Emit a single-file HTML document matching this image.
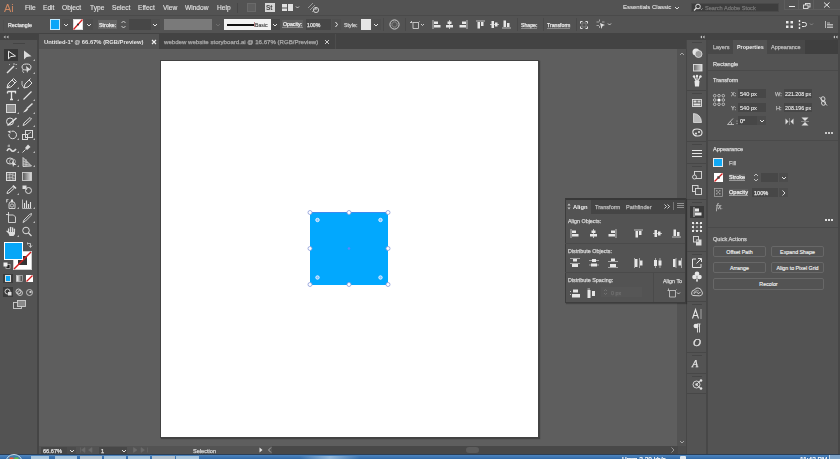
<!DOCTYPE html>
<html><head><meta charset="utf-8">
<style>
*{margin:0;padding:0;box-sizing:border-box}
html,body{width:840px;height:459px;overflow:hidden;background:#535353;font-family:"Liberation Sans",sans-serif;color:#d6d6d6;position:relative}
.a{position:absolute}
.t{position:absolute;white-space:nowrap;font-size:7px;line-height:8px;will-change:transform;-webkit-text-stroke:0.25px currentColor}
.t[style*="bold"],.big{-webkit-text-stroke:0}
.t.mi{-webkit-text-stroke:0.12px currentColor}
svg{position:absolute;overflow:visible}
#menubar{left:0;top:0;width:840px;height:15px;background:#535353}
#ctrl{left:0;top:15px;width:840px;height:18px;background:#535353;border-top:1px solid #4a4a4a}
#tools{left:0;top:33px;width:38px;height:421px;background:#535353}
#tabs{left:38px;top:33px;width:649px;height:16px;background:#434343}
#canvas{left:39px;top:49px;width:638px;height:397px;background:#5e5e5e}
#vscroll{left:677px;top:49px;width:9px;height:397px;background:#535353}
#hscroll{left:38px;top:446px;width:649px;height:9px;background:#535353}
#dockhdr{left:686px;top:33px;width:154px;height:7px;background:#434343}
#dock{left:686px;top:40px;width:21px;height:414px;background:#535353;border-left:1px solid #474747;border-right:1px solid #474747}
#props{left:707px;top:40px;width:133px;height:414px;background:#535353;border-left:1px solid #474747}
#taskbar{left:0;top:455px;width:840px;height:4px;background:#2a63a3}
#artboard{left:160px;top:60px;width:379px;height:378px;background:#fff;border:1px solid #424242;box-shadow:1px 1px 1px rgba(40,40,40,0.5)}
#rect{left:310px;top:212px;width:78px;height:73px;background:#02a8fe;border-top:1px solid #3a8bf0}
.btn{border:1px solid #686868;border-radius:2px;font-size:5.3px;color:#f2f2f2;text-align:center;line-height:10px;white-space:nowrap;-webkit-text-stroke:0.15px #f2f2f2}
.mi{top:4px;font-size:6.6px;color:#e2e2e2}
</style></head><body>
<svg width="0" height="0" style="position:absolute">
<defs>
<symbol id="al-l" viewBox="0 0 9 9"><rect x="0.5" y="0" width="1" height="9" fill="#bdbdbd"/><rect x="2" y="1.5" width="4" height="2.5" fill="#e6e6e6"/><rect x="2" y="5" width="6.5" height="2.5" fill="#e6e6e6"/></symbol>
<symbol id="al-c" viewBox="0 0 9 9"><rect x="4" y="0" width="1" height="9" fill="#bdbdbd"/><rect x="2.5" y="1.5" width="4" height="2.5" fill="#e6e6e6"/><rect x="1" y="5" width="7" height="2.5" fill="#e6e6e6"/></symbol>
<symbol id="al-r" viewBox="0 0 9 9"><rect x="7.5" y="0" width="1" height="9" fill="#bdbdbd"/><rect x="3" y="1.5" width="4" height="2.5" fill="#e6e6e6"/><rect x="0.5" y="5" width="6.5" height="2.5" fill="#e6e6e6"/></symbol>
<symbol id="al-t" viewBox="0 0 9 9"><rect x="0" y="0.5" width="9" height="1" fill="#bdbdbd"/><rect x="1.5" y="2" width="2.5" height="6.5" fill="#e6e6e6"/><rect x="5" y="2" width="2.5" height="4" fill="#e6e6e6"/></symbol>
<symbol id="al-m" viewBox="0 0 9 9"><rect x="0" y="4" width="9" height="1" fill="#bdbdbd"/><rect x="1.5" y="1" width="2.5" height="7" fill="#e6e6e6"/><rect x="5" y="2.5" width="2.5" height="4" fill="#e6e6e6"/></symbol>
<symbol id="al-b" viewBox="0 0 9 9"><rect x="0" y="7.5" width="9" height="1" fill="#bdbdbd"/><rect x="1.5" y="0.5" width="2.5" height="6.5" fill="#e6e6e6"/><rect x="5" y="3" width="2.5" height="4" fill="#e6e6e6"/></symbol>
<symbol id="chev" viewBox="0 0 6 4"><path d="M1 1 L3 3 L5 1" stroke="#e0e0e0" stroke-width="1" fill="none"/></symbol>
<symbol id="tri" viewBox="0 0 3 3"><path d="M3 1 V3 H1 Z" fill="#b8b8b8"/></symbol>
</defs>
</svg>
<div id="menubar" class="a"></div>
<div id="ctrl" class="a"></div>
<div id="tools" class="a"></div>
<div id="tabs" class="a"></div>
<div id="canvas" class="a"></div>
<div id="vscroll" class="a"></div>
<div id="hscroll" class="a"></div>
<div id="dockhdr" class="a"></div>
<div id="dock" class="a"></div>
<div id="props" class="a"></div>
<div id="taskbar" class="a"></div>
<div id="artboard" class="a"></div>
<div id="rect" class="a"></div>

<!-- MENUBAR -->
<div class="t big" style="left:4px;top:2px;font-size:10.8px;line-height:12px;color:#cf8962">Ai</div>
<div class="t mi" style="left:25px">File</div>
<div class="t mi" style="left:43px">Edit</div>
<div class="t mi" style="left:62px">Object</div>
<div class="t mi" style="left:90px">Type</div>
<div class="t mi" style="left:112px">Select</div>
<div class="t mi" style="left:138px">Effect</div>
<div class="t mi" style="left:163px">View</div>
<div class="t mi" style="left:185px">Window</div>
<div class="t mi" style="left:217px">Help</div>
<div class="a" style="left:237px;top:3px;width:1px;height:10px;background:#474747"></div>
<div class="a" style="left:247px;top:3px;width:9px;height:9px;background:#5e5e5e;border:1px solid #6a6a6a"></div>
<div class="a" style="left:265px;top:3px;width:10px;height:9px;background:#d6d6d6"></div>
<div class="t" style="left:266px;top:4px;font-size:6.5px;color:#444;font-weight:bold;line-height:7px">St</div>
<svg style="left:282px;top:4px" width="20" height="8"><rect x="0" y="0" width="5" height="3.5" fill="#e0e0e0"/><rect x="6" y="0" width="5" height="7" fill="#e0e0e0"/><rect x="0" y="4.5" width="5" height="2.5" fill="#e0e0e0"/><path d="M14 2.5 L15.5 4 L17 2.5" stroke="#ddd" stroke-width="0.9" fill="none"/></svg>
<svg style="left:307px;top:2px" width="13" height="12"><path d="M1 6 L6 1 M3 8 L8 3 M5 10 L9 6" stroke="#9a9a9a" stroke-width="1"/><circle cx="9" cy="8" r="2.6" fill="none" stroke="#d8d8d8" stroke-width="0.9"/><path d="M9 5 V8" stroke="#d8d8d8" stroke-width="0.9"/></svg>
<div class="t" style="left:623px;top:3px;font-size:6px;color:#e3e3e3;-webkit-text-stroke:0.1px #e3e3e3">Essentials Classic</div>
<svg style="left:674px;top:6px" width="6" height="4"><use href="#chev"/></svg>
<div class="a" style="left:691px;top:3px;width:88px;height:9px;background:#3e3e3e;border:1px solid #4a4a4a"></div>
<svg style="left:693px;top:3px" width="11" height="9"><circle cx="5" cy="3.5" r="2.3" fill="none" stroke="#e0e0e0" stroke-width="1"/><path d="M3.5 5 L1 7.5" stroke="#e0e0e0" stroke-width="1.2"/><path d="M7.5 5.5 L8.5 6.5 L9.5 5.5" stroke="#ccc" stroke-width="0.7" fill="none"/></svg>
<div class="t" style="left:705px;top:3.5px;font-size:5.6px;color:#777">Search Adobe Stock</div>
<div class="a" style="left:784px;top:0px;width:56px;height:10px;border:1px solid #5d5d5d;border-top:none;border-right:none"></div>
<div class="a" style="left:798px;top:0px;width:1px;height:9px;background:#5d5d5d"></div>
<div class="a" style="left:813px;top:0px;width:1px;height:9px;background:#5d5d5d"></div>
<div class="a" style="left:789px;top:6px;width:6px;height:1px;background:#e8e8e8"></div>
<svg style="left:803px;top:3px" width="8" height="6"><rect x="2.5" y="0.5" width="4.5" height="3.5" fill="none" stroke="#e0e0e0" stroke-width="0.9"/><rect x="0.5" y="2" width="4.5" height="3.5" fill="#535353" stroke="#e0e0e0" stroke-width="0.9"/></svg>
<svg style="left:823px;top:2px" width="8" height="6"><path d="M1 0.5 L6.5 5.5 M6.5 0.5 L1 5.5" stroke="#e8e8e8" stroke-width="1"/></svg>


<!-- CONTROL BAR -->
<div class="a" style="left:3px;top:20px;width:1px;height:11px;background:#4f4f4f"></div>
<div class="t" style="left:8px;top:21px;font-size:5.3px;color:#e6e6e6">Rectangle</div>
<div class="a" style="left:50px;top:19px;width:10px;height:11px;background:#c4e9fc;padding:1px"><div style="width:8px;height:9px;background:#0aa6f8"></div></div>
<div class="a" style="left:62px;top:19px;width:8px;height:11px;background:#4f4f4f"></div>
<svg style="left:63px;top:23px" width="6" height="4"><path d="M1 1 L3 3 L5 1" stroke="#e0e0e0" stroke-width="1" fill="none"/></svg>
<svg style="left:73px;top:19px" width="10" height="11"><rect x="0" y="0" width="10" height="11" fill="#fff"/><rect x="0.5" y="0.5" width="9" height="10" fill="none" stroke="#ddd"/><path d="M0.5 10.5 L9.5 0.5" stroke="#d62020" stroke-width="1.3"/><circle cx="5" cy="5.5" r="1.1" fill="#333"/></svg>
<div class="a" style="left:85px;top:19px;width:8px;height:11px;background:#4f4f4f"></div>
<svg style="left:86px;top:23px" width="6" height="4"><path d="M1 1 L3 3 L5 1" stroke="#e0e0e0" stroke-width="1" fill="none"/></svg>
<div class="a" style="left:98px;top:20px;width:19px;height:9px;background:#656565"></div>
<div class="t" style="left:99px;top:21px;font-size:5.4px;color:#e8e8e8">Stroke:</div>
<svg style="left:120px;top:19px" width="7" height="11"><path d="M1.5 4 L3.5 2 L5.5 4 M1.5 7 L3.5 9 L5.5 7" stroke="#d8d8d8" stroke-width="0.9" fill="none"/></svg>
<div class="a" style="left:129px;top:19px;width:22px;height:11px;background:#474747"></div>
<div class="a" style="left:151px;top:19px;width:9px;height:11px;background:#4f4f4f"></div>
<svg style="left:152px;top:23px" width="6" height="4"><path d="M1 1 L3 3 L5 1" stroke="#e8e8e8" stroke-width="1" fill="none"/></svg>
<div class="a" style="left:164px;top:19px;width:48px;height:11px;background:#7a7a7a"></div>
<svg style="left:215px;top:23px" width="6" height="4"><path d="M1 1 L3 3 L5 1" stroke="#6e6e6e" stroke-width="1" fill="none"/></svg>
<div class="a" style="left:224px;top:19px;width:47px;height:11px;background:#f2f2f2"></div>
<div class="a" style="left:227px;top:24px;width:27px;height:2px;background:#111"></div>
<div class="a" style="left:254px;top:22px;width:1px;height:5px;background:#b88"></div>
<div class="t" style="left:255px;top:21px;font-size:5.2px;color:#3a3a3a;-webkit-text-stroke:0.1px #3a3a3a">Basic</div>
<div class="a" style="left:271px;top:19px;width:9px;height:11px;background:#474747"></div>
<svg style="left:272px;top:23px" width="6" height="4"><path d="M1 1 L3 3 L5 1" stroke="#e8e8e8" stroke-width="1" fill="none"/></svg>
<div class="t" style="left:282px;top:20px;font-size:5.2px;color:#ececec;background:#5f5f5f;padding:1px 1px 0;border-bottom:1px solid #8a8a8a;line-height:6px">Opacity:</div>
<div class="a" style="left:306px;top:19px;width:25px;height:11px;background:#474747"></div>
<div class="t" style="left:307px;top:21px;font-size:5.2px;color:#e0e0e0">100%</div>
<div class="a" style="left:332px;top:19px;width:9px;height:11px;background:#4f4f4f"></div>
<svg style="left:334px;top:21px" width="5" height="7"><path d="M1.5 1 L3.5 3.5 L1.5 6" stroke="#e8e8e8" stroke-width="1" fill="none"/></svg>
<div class="t" style="left:344px;top:21px;font-size:5.4px;color:#d0d0d0">Style:</div>
<div class="a" style="left:361px;top:19px;width:10px;height:11px;background:#e6e6e6"></div>
<div class="a" style="left:372px;top:19px;width:9px;height:11px;background:#4f4f4f"></div>
<svg style="left:373px;top:23px" width="6" height="4"><path d="M1 1 L3 3 L5 1" stroke="#e8e8e8" stroke-width="1" fill="none"/></svg>
<div class="a" style="left:383px;top:18px;width:1px;height:13px;background:#4a4a4a"></div>
<svg style="left:389px;top:19px" width="11" height="11"><circle cx="5.5" cy="5.5" r="4.6" fill="none" stroke="#d0d0d0" stroke-width="1"/><circle cx="5.5" cy="5.5" r="2.6" fill="none" stroke="#bbb" stroke-width="1" stroke-dasharray="1 1"/></svg>
<div class="a" style="left:405px;top:18px;width:1px;height:13px;background:#4a4a4a"></div>
<svg style="left:410px;top:19px" width="16" height="11"><path d="M1.5 2 V4 M0 3.5 H2.5 M3 3.5 H8.5 V9.5 H3 V3.5 M8.5 3.5 L9.5 2.5" stroke="#cfcfcf" stroke-width="0.9" fill="none"/><path d="M11 5 L12.5 6.5 L14 5" stroke="#ddd" stroke-width="0.9" fill="none"/></svg>
<svg style="left:432px;top:20px" width="9" height="9"><use href="#al-l"/></svg>
<svg style="left:445px;top:20px" width="9" height="9"><use href="#al-c"/></svg>
<svg style="left:459px;top:20px" width="9" height="9"><use href="#al-r"/></svg>
<svg style="left:476px;top:20px" width="9" height="9"><use href="#al-t"/></svg>
<svg style="left:490px;top:20px" width="9" height="9"><use href="#al-m"/></svg>
<svg style="left:502px;top:20px" width="9" height="9"><use href="#al-b"/></svg>
<div class="a" style="left:517px;top:18px;width:1px;height:13px;background:#4a4a4a"></div>
<div class="t" style="left:521px;top:22px;font-size:5.2px;color:#e8e8e8;border-bottom:1px solid #888;line-height:6px">Shape:</div>
<div class="a" style="left:543px;top:18px;width:1px;height:13px;background:#4a4a4a"></div>
<div class="t" style="left:547px;top:22px;font-size:5.2px;color:#e8e8e8;border-bottom:1px solid #888;line-height:6px">Transform</div>
<div class="a" style="left:576px;top:18px;width:1px;height:13px;background:#4a4a4a"></div>
<svg style="left:580px;top:21px" width="8" height="8"><path d="M0.5 2.5 V0.5 H2.5 M5.5 0.5 H7.5 V2.5 M7.5 5.5 V7.5 H5.5 M2.5 7.5 H0.5 V5.5" stroke="#e0e0e0" stroke-width="1" fill="none"/><rect x="2" y="2" width="4" height="4" fill="none" stroke="#9a9a9a" stroke-width="0.6"/></svg>
<svg style="left:596px;top:19px" width="18" height="11"><path d="M0.5 3 H3 M6 3 H8.5 M0.5 6.5 H3 M3.5 0.5 V2.5 M3.5 7 V9" stroke="#bdbdbd" stroke-width="0.8"/><path d="M4 4 L9 6 L6.5 7 L5.5 10 Z" fill="#e0e0e0"/><path d="M12 4.5 L13.5 6 L15 4.5" stroke="#ddd" stroke-width="0.9" fill="none"/></svg>
<svg style="left:786px;top:21px" width="7" height="7"><rect x="0" y="0" width="2.5" height="2.5" fill="#e8e8e8"/><rect x="4.5" y="0" width="2.5" height="2.5" fill="#e8e8e8"/><rect x="0" y="4.5" width="2.5" height="2.5" fill="#e8e8e8"/><rect x="4.5" y="4.5" width="2.5" height="2.5" fill="#e8e8e8"/></svg>
<svg style="left:798px;top:19px" width="20" height="11"><path d="M1.5 1 V3 M1.5 4.5 V6.5 M1.5 8 V10" stroke="#e8e8e8" stroke-width="1.4"/><path d="M4 3.5 H6.5 A2 2 0 0 1 6.5 7.5 H4" stroke="#e8e8e8" stroke-width="1" fill="none"/><path d="M12 4.5 L13.5 6 L15 4.5" stroke="#8a8a8a" stroke-width="0.9" fill="none"/></svg>
<svg style="left:825px;top:21px" width="8" height="7"><path d="M0.5 0 V7 M2 3.5 H8 M2 5 H8 M2 6.5 H8 M2 2 H5" stroke="#cfcfcf" stroke-width="0.8"/></svg>
<div class="a" style="left:838px;top:16px;width:2px;height:17px;background:#474747"></div>


<!-- TABS -->
<div class="a" style="left:39px;top:34px;width:120px;height:15px;background:#535353"></div>
<div class="t" style="left:44px;top:38px;font-size:5.8px;font-weight:bold;color:#e6e6e6">Untitled-1* @ 66.67% (RGB/Preview)</div>
<svg style="left:151px;top:39px" width="6" height="6"><path d="M1 1 L5 5 M5 1 L1 5" stroke="#f0f0f0" stroke-width="1.1"/></svg>
<div class="t" style="left:164px;top:38px;font-size:6.1px;color:#ababab">webdew website storyboard.ai @ 16.67% (RGB/Preview)</div>
<svg style="left:324px;top:39px" width="6" height="6"><path d="M1 1 L5 5 M5 1 L1 5" stroke="#ccc" stroke-width="1"/></svg><div class="a" style="left:335px;top:34px;width:1px;height:15px;background:#4d4d4d"></div>


<!-- TOOLS -->
<div class="a" style="left:0;top:33px;width:38px;height:7px;background:#434343"></div>
<svg style="left:3px;top:35px" width="6" height="4"><path d="M2.5 0.5 L0.5 2 L2.5 3.5 Z M5.5 0.5 L3.5 2 L5.5 3.5 Z" fill="#bdbdbd"/></svg>
<div class="a" style="left:37px;top:40px;width:2px;height:414px;background:#454545"></div>
<div class="a" style="left:13px;top:43px;width:12px;height:1px;background:#444"></div>
<!-- row1 -->
<div class="a" style="left:4px;top:49px;width:14px;height:12px;background:#383838"></div>
<svg style="left:7px;top:50px" width="10" height="10"><path d="M1.5 1.2 L1.5 8.8 L3.8 6.6 L8.5 6 Z" fill="none" stroke="#e8e8e8" stroke-width="1" stroke-linejoin="round"/></svg>
<svg style="left:23px;top:50px" width="10" height="10"><path d="M1 0.5 L1 9.5 L3.6 7 L8.5 6.2 Z" fill="#dadada"/></svg>
<svg style="left:32px;top:58px" width="3" height="3"><use href="#tri"/></svg>
<!-- row2 wand / lasso -->
<svg style="left:6px;top:63px" width="11" height="11"><path d="M1 10 L8 3" stroke="#e0e0e0" stroke-width="1.5"/><path d="M8 0 V2 M9.5 1.5 H11 M3 1 L4 2 M10 5 L10.5 6" stroke="#cfcfcf" stroke-width="0.8"/></svg>
<svg style="left:21px;top:63px" width="12" height="11"><ellipse cx="5.5" cy="4" rx="4.5" ry="3" fill="none" stroke="#dcdcdc" stroke-width="1"/><path d="M5 3 L10 7 L7.5 7.3 L6 10 Z" fill="#dcdcdc"/><path d="M2 6 Q1 9 3 10" stroke="#ccc" stroke-width="0.9" fill="none"/></svg>
<svg style="left:32px;top:71px" width="3" height="3"><use href="#tri"/></svg>
<!-- row3 pen / curvature -->
<svg style="left:6px;top:78px" width="11" height="11"><path d="M1 10 L2 6 L6 2 L9 5 L5 9 Z" fill="none" stroke="#e0e0e0" stroke-width="1"/><path d="M6 2 L7.5 0.5 L10.5 3.5 L9 5" fill="none" stroke="#e0e0e0" stroke-width="1"/><path d="M1 10 L4 7" stroke="#e0e0e0" stroke-width="0.8"/></svg>
<svg style="left:16px;top:86px" width="3" height="3"><use href="#tri"/></svg>
<svg style="left:21px;top:78px" width="12" height="11"><path d="M3 10 L4 6 L8 2 L11 5 L7 9 Z" fill="none" stroke="#e0e0e0" stroke-width="1"/><path d="M8 2 L9.5 0.5" stroke="#e0e0e0" stroke-width="1"/><path d="M1 3 Q0 7 3 10" stroke="#ccc" stroke-width="0.9" fill="none"/></svg>
<!-- row4 type / line -->
<svg style="left:7px;top:91px" width="9" height="9"><path d="M0.5 0.5 H8.5 V2.5 M0.5 0.5 V2.5 M4.5 0.5 V8.5 M3 8.5 H6" stroke="#e6e6e6" stroke-width="1.3" fill="none"/></svg>
<svg style="left:16px;top:98px" width="3" height="3"><use href="#tri"/></svg>
<svg style="left:23px;top:91px" width="9" height="9"><path d="M0.5 8.5 L8.5 0.5" stroke="#e6e6e6" stroke-width="1.1"/></svg>
<svg style="left:32px;top:98px" width="3" height="3"><use href="#tri"/></svg>
<!-- row5 rect / brush -->
<svg style="left:6px;top:104px" width="10" height="9"><rect x="0.5" y="0.5" width="9" height="8" fill="#8a8a8a" stroke="#d8d8d8" stroke-width="1"/><path d="M3 1 V8 M5 1 V8 M7 1 V8 M1 3 H9 M1 5 H9" stroke="#9c9c9c" stroke-width="0.5"/></svg>
<svg style="left:16px;top:111px" width="3" height="3"><use href="#tri"/></svg>
<svg style="left:22px;top:103px" width="11" height="10"><path d="M10.5 0.5 L5 5.5" stroke="#e0e0e0" stroke-width="1.5"/><path d="M5 5 L1 9.5 L4 8.5 L6 6.5 Z" fill="#e6e6e6"/></svg>
<svg style="left:32px;top:111px" width="3" height="3"><use href="#tri"/></svg>
<!-- row6 shaper / pencil -->
<svg style="left:6px;top:117px" width="11" height="9"><circle cx="4" cy="4.5" r="3.5" fill="none" stroke="#dcdcdc" stroke-width="1"/><path d="M1.5 8.5 L10.5 1" stroke="#e6e6e6" stroke-width="1.5"/></svg>
<svg style="left:16px;top:124px" width="3" height="3"><use href="#tri"/></svg>
<svg style="left:22px;top:117px" width="10" height="9"><path d="M1 8.5 L2 6 L8 0.5 L9.5 2 L3.5 7.5 Z" fill="none" stroke="#dcdcdc" stroke-width="1"/></svg>
<svg style="left:32px;top:124px" width="3" height="3"><use href="#tri"/></svg>
<!-- row7 rotate / scale -->
<svg style="left:7px;top:130px" width="10" height="10"><path d="M2 4 A3.8 3.8 0 1 0 4.5 1.3" fill="none" stroke="#e0e0e0" stroke-width="1"/><path d="M0.5 1.5 L3.5 0.5 L3.5 3.5 Z" fill="#e0e0e0"/></svg>
<svg style="left:16px;top:137px" width="3" height="3"><use href="#tri"/></svg>
<svg style="left:22px;top:130px" width="11" height="10"><rect x="0.5" y="4.5" width="5" height="5" fill="none" stroke="#dcdcdc" stroke-width="1"/><rect x="3.5" y="0.5" width="7" height="7" fill="none" stroke="#dcdcdc" stroke-width="1"/><path d="M5 5 L9 2" stroke="#dcdcdc" stroke-width="0.8"/></svg>
<svg style="left:32px;top:137px" width="3" height="3"><use href="#tri"/></svg>
<!-- row8 width / puppet -->
<svg style="left:6px;top:144px" width="11" height="9"><path d="M1 7 Q3 3 5 6 Q7 9 10 5" fill="none" stroke="#dcdcdc" stroke-width="1.6"/><path d="M3 0.5 V3 M1.5 2 H4" stroke="#ccc" stroke-width="0.8"/></svg>
<svg style="left:16px;top:150px" width="3" height="3"><use href="#tri"/></svg>
<svg style="left:22px;top:144px" width="9" height="9"><path d="M0.5 8.5 L3.5 5.5" stroke="#dcdcdc" stroke-width="1"/><path d="M3 4 L5 6 L8.5 3 L6 0.5 Z" fill="#dcdcdc"/></svg>
<svg style="left:32px;top:150px" width="3" height="3"><use href="#tri"/></svg>
<!-- row9 shape builder / perspective -->
<svg style="left:6px;top:157px" width="12" height="10"><ellipse cx="4" cy="4" rx="3.5" ry="3" fill="none" stroke="#dcdcdc" stroke-width="1"/><ellipse cx="6.5" cy="4.5" rx="3" ry="2.5" fill="none" stroke="#bbb" stroke-width="0.8"/><path d="M6 4 L10.5 8 L8 8 L7 10 Z" fill="#e0e0e0"/></svg>
<svg style="left:16px;top:164px" width="3" height="3"><use href="#tri"/></svg>
<svg style="left:22px;top:157px" width="10" height="10"><path d="M1 0.5 V9.5 L9.5 9 Z" fill="#7a7a7a" stroke="#dcdcdc" stroke-width="0.9"/><path d="M1 4 L6 6 M1 7 L8 8 M4 2 V9.3" stroke="#dcdcdc" stroke-width="0.6"/></svg>
<svg style="left:32px;top:164px" width="3" height="3"><use href="#tri"/></svg>
<!-- row10 mesh / gradient -->
<svg style="left:6px;top:172px" width="10" height="9"><rect x="0.5" y="0.5" width="9" height="8" fill="#6e6e6e" stroke="#dcdcdc" stroke-width="1"/><path d="M1 3 Q5 1 9 4 M1 6 Q5 4 9 7 M4 1 Q3 5 4 8 M7 1 Q6 5 7 8" stroke="#cfcfcf" stroke-width="0.6" fill="none"/></svg>
<svg style="left:22px;top:172px" width="10" height="9"><defs><linearGradient id="g1"><stop offset="0" stop-color="#555"/><stop offset="1" stop-color="#e0e0e0"/></linearGradient></defs><rect x="0.5" y="0.5" width="9" height="8" fill="url(#g1)" stroke="#cfcfcf" stroke-width="0.9"/></svg>
<!-- row11 eyedropper / blend -->
<svg style="left:6px;top:185px" width="11" height="9"><path d="M1 8.5 L1.5 6.5 L7 1.5 L8.5 3 L3 8 Z" fill="none" stroke="#dcdcdc" stroke-width="1"/><path d="M7 0.5 L10 3.5" stroke="#e6e6e6" stroke-width="1.4"/></svg>
<svg style="left:16px;top:192px" width="3" height="3"><use href="#tri"/></svg>
<svg style="left:22px;top:185px" width="10" height="9"><rect x="0.5" y="0.5" width="4" height="3.5" fill="#dcdcdc"/><circle cx="6.5" cy="5.5" r="3" fill="none" stroke="#dcdcdc" stroke-width="1"/><path d="M3 3 L5 5" stroke="#ccc" stroke-width="0.8"/></svg>
<!-- row12 symbol sprayer / graph -->
<svg style="left:6px;top:199px" width="11" height="10"><path d="M0.5 0.5 V3.5 M0.5 0.5 H2.5 M0.5 2 H2" stroke="#cfcfcf" stroke-width="0.8"/><path d="M4 3 H8 L9 5 V9.5 H3 V5 Z" fill="none" stroke="#dcdcdc" stroke-width="0.9"/><circle cx="6" cy="6.5" r="1.6" fill="none" stroke="#dcdcdc" stroke-width="0.8"/><rect x="5" y="0.5" width="2" height="2.5" fill="#dcdcdc"/></svg>
<svg style="left:16px;top:206px" width="3" height="3"><use href="#tri"/></svg>
<svg style="left:22px;top:199px" width="10" height="10"><path d="M0.5 0.5 V9.5 H9.5" stroke="#cfcfcf" stroke-width="0.8" fill="none"/><path d="M2.5 9 V4 M4.5 9 V1.5 M6.5 9 V5 M8.5 9 V3" stroke="#e0e0e0" stroke-width="1.1"/></svg>
<svg style="left:32px;top:206px" width="3" height="3"><use href="#tri"/></svg>
<!-- row13 artboard / slice -->
<svg style="left:6px;top:212px" width="10" height="11"><path d="M2.5 0 V3 M0 2.5 H3" stroke="#dcdcdc" stroke-width="0.9"/><path d="M2.5 3 H7.5 L9.5 5 V10.5 H2.5 Z" fill="none" stroke="#dcdcdc" stroke-width="0.9"/></svg>
<svg style="left:22px;top:213px" width="10" height="10"><path d="M1 9.5 L2 7 L7.5 1.5 L9.5 0.5 L9 2.5 L3.5 8 Z" fill="none" stroke="#dcdcdc" stroke-width="0.9"/></svg>
<svg style="left:32px;top:220px" width="3" height="3"><use href="#tri"/></svg>
<!-- row14 hand / zoom -->
<svg style="left:6px;top:226px" width="10" height="11"><g stroke="#dcdcdc" stroke-width="1.3" stroke-linecap="round" fill="none"><path d="M2.6 6.5 V3"/><path d="M4.6 5.5 V1.3"/><path d="M6.6 5.5 V1.8"/><path d="M8.4 6 V3.2"/><path d="M2.6 6.5 L1 5.2"/></g><path d="M2 6 H9 V8 L7.5 10 H3.5 Z" fill="#dcdcdc"/></svg>
<svg style="left:16px;top:234px" width="3" height="3"><use href="#tri"/></svg>
<svg style="left:22px;top:226px" width="10" height="11"><circle cx="4" cy="4.5" r="3.3" fill="none" stroke="#dcdcdc" stroke-width="1"/><path d="M6.5 7 L9.5 10" stroke="#dcdcdc" stroke-width="1.2"/></svg>
<!-- fill/stroke -->
<svg style="left:13px;top:251px" width="19" height="19"><rect x="0" y="0" width="19" height="19" fill="#fff"/><rect x="0.5" y="0.5" width="18" height="18" fill="none" stroke="#cfcfcf"/><rect x="5" y="5" width="9" height="9" fill="#353535"/><path d="M1 18 L18 1" stroke="#d61d1d" stroke-width="1.4"/></svg>
<div class="a" style="left:4px;top:242px;width:19px;height:18px;background:#fff;padding:1px"><div style="width:17px;height:16px;background:#07a6f7"></div></div>
<svg style="left:27px;top:242px" width="6" height="7"><path d="M0.5 1.5 H3.5 V5 M2 3.5 L3.5 5.5 L5 3.5 M0.5 0.5 L0.5 2.5" stroke="#d6d6d6" stroke-width="0.8" fill="none"/></svg>
<svg style="left:3px;top:262px" width="8" height="7"><rect x="3" y="2.5" width="4" height="4" fill="#222" stroke="#e0e0e0" stroke-width="0.6"/><rect x="0.5" y="0.5" width="4" height="4" fill="#f0f0f0"/></svg>
<!-- color modes -->
<div class="a" style="left:3px;top:274px;width:10px;height:9px;background:#3c3c3c"></div>
<div class="a" style="left:5px;top:275px;width:6px;height:7px;background:#0aa6f7;border:1px solid #ddd"></div>
<svg style="left:16px;top:275px" width="7" height="7"><defs><linearGradient id="g2"><stop offset="0" stop-color="#fff"/><stop offset="1" stop-color="#333"/></linearGradient></defs><rect x="0.5" y="0.5" width="6" height="6" fill="url(#g2)" stroke="#ccc" stroke-width="0.6"/></svg>
<svg style="left:26px;top:275px" width="7" height="7"><rect x="0" y="0" width="7" height="7" fill="#fff"/><path d="M0.5 6.5 L6.5 0.5" stroke="#d61d1d" stroke-width="1.3"/></svg>
<!-- draw modes -->
<div class="a" style="left:3px;top:287px;width:10px;height:10px;background:#3c3c3c"></div>
<svg style="left:4px;top:288px" width="8" height="8"><circle cx="3.5" cy="3.5" r="2.5" fill="none" stroke="#ddd" stroke-width="0.9"/><rect x="4" y="4" width="3.5" height="3.5" fill="#ddd"/></svg>
<svg style="left:15px;top:288px" width="8" height="8"><circle cx="3.5" cy="3.5" r="2.5" fill="none" stroke="#ddd" stroke-width="0.9"/><circle cx="5" cy="5" r="2.5" fill="none" stroke="#ccc" stroke-width="0.9"/></svg>
<svg style="left:26px;top:289px" width="7" height="7"><circle cx="3.5" cy="3.5" r="3" fill="none" stroke="#ccc" stroke-width="0.9"/><rect x="3.5" y="2" width="2" height="2" fill="#ccc"/></svg>
<!-- screen mode -->
<svg style="left:13px;top:300px" width="13" height="9"><rect x="0.5" y="2.5" width="8" height="6" fill="#535353" stroke="#cfcfcf" stroke-width="0.9"/><rect x="4.5" y="0.5" width="8" height="6" fill="#888" stroke="#cfcfcf" stroke-width="0.9"/></svg>


<!-- ART -->
<svg style="left:300px;top:202px" width="100" height="95">
<g fill="#fff" stroke="#8a9ad8" stroke-width="0.8">
<circle cx="10" cy="10.5" r="2"/><circle cx="49" cy="10.5" r="2"/><circle cx="88" cy="10.5" r="2"/>
<circle cx="10" cy="46.5" r="2"/><circle cx="88" cy="46.5" r="2"/>
<circle cx="10" cy="82.5" r="2"/><circle cx="49" cy="82.5" r="2"/><circle cx="88" cy="82.5" r="2"/>
</g>
<g fill="#7ec2ff" stroke="#e6f2ff" stroke-width="1">
<circle cx="17.5" cy="18" r="1.7"/><circle cx="80.5" cy="18" r="1.7"/><circle cx="17.5" cy="75.5" r="1.7"/><circle cx="80.5" cy="75.5" r="1.7"/>
</g>
<circle cx="49" cy="46.5" r="1.3" fill="#5a88ff"/>
</svg>


<!-- ALIGN PANEL -->
<div class="a" style="left:565px;top:198px;width:121px;height:105px;background:#535353;border:1px solid #3d3d3d;border-top:2px solid #383838;box-shadow:1px 1px 1px rgba(0,0,0,0.25)"></div>
<div class="a" style="left:566px;top:200px;width:119px;height:14px;background:#454545"></div>
<div class="a" style="left:566px;top:200px;width:25px;height:14px;background:#535353"></div>
<svg style="left:567px;top:203px" width="4" height="7"><path d="M2 0.5 L3.5 2.5 H0.5 Z M2 6.5 L3.5 4.5 H0.5 Z" fill="#ccc"/></svg>
<div class="t" style="left:573px;top:203px;font-size:5.8px;font-weight:bold;color:#f0f0f0">Align</div>
<div class="t" style="left:595px;top:203px;font-size:5.6px;color:#bdbdbd">Transform</div>
<div class="t" style="left:626px;top:203px;font-size:5.6px;color:#bdbdbd">Pathfinder</div>
<svg style="left:664px;top:204px" width="7" height="5"><path d="M0.5 0.5 L2.5 2.5 L0.5 4.5 M3.5 0.5 L5.5 2.5 L3.5 4.5" stroke="#e0e0e0" stroke-width="0.9" fill="none"/></svg>
<div class="a" style="left:673px;top:202px;width:1px;height:8px;background:#777"></div>
<svg style="left:677px;top:203px" width="7" height="6"><path d="M0 0.5 H7 M0 2.5 H7 M0 4.5 H7" stroke="#9a9a9a" stroke-width="0.9"/></svg>
<div class="t" style="left:568px;top:217px;font-size:5.4px;color:#d6d6d6">Align Objects:</div>
<svg style="left:570px;top:229px" width="9" height="9"><use href="#al-l"/></svg>
<svg style="left:589px;top:229px" width="9" height="9"><use href="#al-c"/></svg>
<svg style="left:608px;top:229px" width="9" height="9"><use href="#al-r"/></svg>
<svg style="left:634px;top:229px" width="9" height="9"><use href="#al-t"/></svg>
<svg style="left:653px;top:229px" width="9" height="9"><use href="#al-m"/></svg>
<svg style="left:672px;top:229px" width="9" height="9"><use href="#al-b"/></svg>
<div class="a" style="left:565px;top:243px;width:120px;height:1px;background:#4a4a4a"></div>
<div class="t" style="left:568px;top:247px;font-size:5.4px;color:#d6d6d6">Distribute Objects:</div>
<svg style="left:570px;top:258px" width="10" height="10"><path d="M0 0.5 H10 M0 5.5 H10" stroke="#bdbdbd" stroke-width="0.8"/><rect x="3" y="1" width="4" height="2.5" fill="#e6e6e6"/><rect x="2" y="6" width="6" height="3" fill="#e6e6e6"/></svg>
<svg style="left:589px;top:258px" width="10" height="10"><path d="M0 2.5 H10 M0 7 H10" stroke="#bdbdbd" stroke-width="0.8"/><rect x="3" y="1" width="4" height="3" fill="#e6e6e6"/><rect x="2" y="5.5" width="6" height="3" fill="#e6e6e6"/></svg>
<svg style="left:608px;top:258px" width="10" height="10"><path d="M0 3.5 H10 M0 9.5 H10" stroke="#bdbdbd" stroke-width="0.8"/><rect x="3" y="0.5" width="4" height="2.5" fill="#e6e6e6"/><rect x="2" y="6" width="6" height="3" fill="#e6e6e6"/></svg>
<svg style="left:634px;top:258px" width="10" height="10"><path d="M0.5 0 V10 M5.5 0 V10" stroke="#bdbdbd" stroke-width="0.8"/><rect x="1" y="1" width="2.5" height="8" fill="#e6e6e6"/><rect x="6" y="2.5" width="2.5" height="5" fill="#e6e6e6"/></svg>
<svg style="left:653px;top:258px" width="10" height="10"><path d="M2.5 0 V10 M7 0 V10" stroke="#bdbdbd" stroke-width="0.8"/><rect x="1" y="2" width="3" height="6" fill="#e6e6e6"/><rect x="5.5" y="2.5" width="3" height="5" fill="#e6e6e6"/></svg>
<svg style="left:672px;top:258px" width="10" height="10"><path d="M4 0 V10 M9.5 0 V10" stroke="#bdbdbd" stroke-width="0.8"/><rect x="1" y="1" width="2.5" height="8" fill="#e6e6e6"/><rect x="6.5" y="2.5" width="2.5" height="5" fill="#e6e6e6"/></svg>
<div class="a" style="left:565px;top:272px;width:120px;height:1px;background:#4a4a4a"></div>
<div class="a" style="left:653px;top:273px;width:1px;height:29px;background:#4a4a4a"></div>
<div class="t" style="left:568px;top:276px;font-size:5.4px;color:#d6d6d6">Distribute Spacing:</div>
<div class="t" style="left:663px;top:277px;font-size:5.4px;color:#d6d6d6">Align To</div>
<svg style="left:570px;top:289px" width="10" height="9"><path d="M0.5 2 V3 M0.5 5 V6" stroke="#cfcfcf" stroke-width="0.9"/><rect x="3" y="0.5" width="5" height="3" fill="#e6e6e6"/><rect x="2" y="5" width="8" height="3.5" fill="#e6e6e6"/></svg>
<svg style="left:587px;top:288px" width="9" height="10"><path d="M0.5 1 H3" stroke="#cfcfcf" stroke-width="0.9"/><rect x="0.5" y="2" width="3" height="8" fill="#e6e6e6"/><rect x="5" y="3" width="3" height="5" fill="#e6e6e6"/></svg>
<div class="a" style="left:601px;top:287px;width:41px;height:10px;background:#565656"></div>
<svg style="left:603px;top:288px" width="5" height="8"><path d="M1 3 L2.5 1.5 L4 3 M1 5 L2.5 6.5 L4 5" stroke="#777" stroke-width="0.8" fill="none"/></svg>
<div class="t" style="left:611px;top:289px;font-size:5.4px;color:#707070">0 px</div>
<svg style="left:667px;top:288px" width="14" height="10"><path d="M1.5 0.5 V2.5 M0.5 2.5 H2.5 M2.5 2.5 H8.5 V9 H2.5 Z M8.5 2.5 L9.5 1.5" stroke="#cfcfcf" stroke-width="0.8" fill="none"/><path d="M10 4.5 L11.5 6 L13 4.5" stroke="#ddd" stroke-width="0.8" fill="none"/></svg>


<!-- DOCK -->
<svg style="left:700px;top:35px" width="5" height="4"><path d="M2 0.5 L0.3 2 L2 3.5 Z M4.5 0.5 L2.8 2 L4.5 3.5 Z" fill="#d0d0d0"/></svg>
<svg style="left:833px;top:35px" width="5" height="4"><path d="M2 0.5 L0.3 2 L2 3.5 Z M4.5 0.5 L2.8 2 L4.5 3.5 Z" fill="#d0d0d0"/></svg>
<!-- grips & separators -->
<div class="a" style="left:692px;top:42px;width:10px;height:1px;background:#464646"></div>
<div class="a" style="left:687px;top:90px;width:19px;height:1px;background:#474747"></div>
<div class="a" style="left:692px;top:93px;width:10px;height:1px;background:#464646"></div>
<div class="a" style="left:687px;top:141px;width:19px;height:1px;background:#474747"></div>
<div class="a" style="left:692px;top:144px;width:10px;height:1px;background:#464646"></div>
<div class="a" style="left:687px;top:163px;width:19px;height:1px;background:#474747"></div>
<div class="a" style="left:692px;top:166px;width:10px;height:1px;background:#464646"></div>
<div class="a" style="left:687px;top:199px;width:19px;height:1px;background:#474747"></div>
<div class="a" style="left:692px;top:202px;width:10px;height:1px;background:#464646"></div>
<div class="a" style="left:687px;top:251px;width:19px;height:1px;background:#474747"></div>
<div class="a" style="left:692px;top:254px;width:10px;height:1px;background:#464646"></div>
<div class="a" style="left:687px;top:301px;width:19px;height:1px;background:#474747"></div>
<div class="a" style="left:692px;top:304px;width:10px;height:1px;background:#464646"></div>
<div class="a" style="left:687px;top:352px;width:19px;height:1px;background:#474747"></div>
<div class="a" style="left:692px;top:355px;width:10px;height:1px;background:#464646"></div>
<div class="a" style="left:687px;top:373px;width:19px;height:1px;background:#474747"></div>
<div class="a" style="left:692px;top:376px;width:10px;height:1px;background:#464646"></div>
<div class="a" style="left:687px;top:393px;width:19px;height:1px;background:#474747"></div>
<!-- icons -->
<svg style="left:692px;top:48px" width="11" height="10"><circle cx="4" cy="4" r="3.5" fill="#e6e6e6"/><circle cx="6.5" cy="6" r="3.5" fill="#9a9a9a" stroke="#e6e6e6" stroke-width="0.8"/></svg>
<svg style="left:692px;top:63px" width="11" height="9"><defs><linearGradient id="g3"><stop offset="0" stop-color="#666"/><stop offset="1" stop-color="#ddd"/></linearGradient></defs><rect x="1.5" y="1.5" width="8.5" height="6.5" fill="url(#g3)" stroke="#e0e0e0" stroke-width="0.9"/></svg>
<svg style="left:692px;top:75px" width="10" height="12"><path d="M2 1 L4 6 M5 0.5 L5 6 M8.5 1 L6 6" stroke="#e6e6e6" stroke-width="1.1"/><circle cx="2" cy="1.5" r="1.2" fill="#e6e6e6"/><circle cx="5" cy="1" r="1.2" fill="#e6e6e6"/><circle cx="8.5" cy="1.5" r="1.2" fill="#e6e6e6"/><path d="M2.5 6 H7.5 L7 11.5 H3 Z" fill="#e6e6e6"/></svg>
<svg style="left:692px;top:99px" width="10" height="8"><rect x="0.5" y="0.5" width="9" height="7" fill="#535353" stroke="#e0e0e0" stroke-width="0.9"/><rect x="1.5" y="1.5" width="3" height="2" fill="#e0e0e0"/><rect x="5.5" y="1.5" width="3" height="2" fill="#cfcfcf"/><rect x="1.5" y="4.5" width="7" height="2" fill="#e6e6e6"/></svg>
<svg style="left:693px;top:113px" width="9" height="10"><path d="M0.5 0.5 Q8 1 8.5 9.5 H0.5 Z" fill="#bbb" stroke="#e0e0e0" stroke-width="0.8"/></svg>
<svg style="left:692px;top:128px" width="11" height="9"><path d="M1 5 Q0 1 5 1 Q10 1 10 4.5 Q10 8 6 8 Q2 8.5 1 5 Z" fill="none" stroke="#e6e6e6" stroke-width="1.1"/><circle cx="4" cy="5.5" r="1" fill="#e6e6e6"/><circle cx="7" cy="4" r="1" fill="#e6e6e6"/></svg>
<svg style="left:692px;top:150px" width="10" height="7"><path d="M0 0.5 H10 M0 3.5 H10 M0 6.5 H10" stroke="#e6e6e6" stroke-width="1"/></svg>
<svg style="left:692px;top:171px" width="10" height="9"><rect x="2.5" y="0.5" width="7" height="7" fill="none" stroke="#dcdcdc" stroke-width="0.9"/><circle cx="2.5" cy="6" r="2" fill="#535353" stroke="#dcdcdc" stroke-width="0.9"/></svg>
<svg style="left:692px;top:185px" width="10" height="10"><rect x="0.5" y="0.5" width="5.5" height="6" fill="none" stroke="#dcdcdc" stroke-width="0.9"/><rect x="3.5" y="3.5" width="6" height="6" fill="#535353" stroke="#dcdcdc" stroke-width="0.9"/></svg>
<div class="a" style="left:690px;top:206px;width:14px;height:12px;background:#3a3a3a"></div>
<svg style="left:693px;top:207px" width="9" height="10"><rect x="0.5" y="0" width="1" height="10" fill="#cfcfcf"/><rect x="2" y="1.5" width="4" height="3" fill="#e6e6e6"/><rect x="2" y="5.5" width="6.5" height="3" fill="#e6e6e6"/></svg>
<svg style="left:692px;top:222px" width="10" height="10"><rect x="1.5" y="1.5" width="7" height="7" fill="none" stroke="#bbb" stroke-width="0.6" stroke-dasharray="1 1"/><g fill="#e6e6e6"><rect x="0" y="0" width="2" height="2"/><rect x="4" y="0" width="2" height="2"/><rect x="8" y="0" width="2" height="2"/><rect x="0" y="4" width="2" height="2"/><rect x="8" y="4" width="2" height="2"/><rect x="0" y="8" width="2" height="2"/><rect x="4" y="8" width="2" height="2"/><rect x="8" y="8" width="2" height="2"/><rect x="4.3" y="4.3" width="1.4" height="1.4"/></g></svg>
<svg style="left:693px;top:236px" width="9" height="10"><rect x="0.5" y="0.5" width="5" height="5.5" fill="#535353" stroke="#dcdcdc" stroke-width="0.9"/><rect x="3" y="3.5" width="5.5" height="6" fill="#dcdcdc"/><rect x="3.5" y="4" width="2" height="2" fill="#888"/></svg>
<svg style="left:692px;top:258px" width="10" height="10"><path d="M4 1 H0.5 V9.5 H9 V6" stroke="#e6e6e6" stroke-width="1" fill="none"/><path d="M4.5 5.5 L9 1 M6 0.5 H9.5 V4" stroke="#e6e6e6" stroke-width="1" fill="none"/></svg>
<svg style="left:692px;top:271px" width="10" height="11"><circle cx="5" cy="2.8" r="2.3" fill="#e6e6e6"/><circle cx="2.5" cy="6" r="2.3" fill="#e6e6e6"/><circle cx="7.5" cy="6" r="2.3" fill="#e6e6e6"/><path d="M5 5 L4 10.5 H6 Z" fill="#e6e6e6"/></svg>
<svg style="left:691px;top:287px" width="12" height="10"><path d="M2 8.5 Q0 8 0.7 5.5 Q1 3 3.5 3 Q4.5 0.7 7 1 Q10 1.2 10.5 4 Q11.8 5 11.3 7 Q10.8 8.8 8.5 8.8 Z" fill="none" stroke="#dcdcdc" stroke-width="0.9"/><path d="M3 7 Q3.5 4.5 5.5 5 Q7 5.5 7.5 7 Q8 5 9.5 5.5" fill="none" stroke="#dcdcdc" stroke-width="0.8"/><path d="M2.5 5.5 Q5 2.5 8 4" fill="none" stroke="#bdbdbd" stroke-width="0.7"/></svg>
<svg style="left:692px;top:309px" width="11" height="10"><path d="M0.5 9.5 L3.5 0.5 L6.5 9.5 M1.5 6.5 H5.5" stroke="#e6e6e6" stroke-width="1.1" fill="none"/><path d="M9 0 V10" stroke="#bbb" stroke-width="0.8"/></svg>
<svg style="left:693px;top:323px" width="8" height="10"><path d="M4 1 H7.5 M4.5 1 V9.5 M6.5 1 V9.5" stroke="#e6e6e6" stroke-width="0.9" fill="none"/><ellipse cx="3" cy="3" rx="2.5" ry="2.2" fill="#e6e6e6"/></svg>
<div class="t" style="left:693px;top:336px;font-size:11px;line-height:12px;color:#e6e6e6;font-family:'Liberation Serif',serif;font-style:italic">O</div>
<div class="t" style="left:692px;top:358px;font-size:10px;line-height:11px;color:#e6e6e6;font-family:'Liberation Serif',serif;font-style:italic">A</div>
<svg style="left:692px;top:379px" width="11" height="11"><circle cx="4.5" cy="5.5" r="3.5" fill="none" stroke="#dcdcdc" stroke-width="0.9"/><circle cx="4.5" cy="5.5" r="1.2" fill="#dcdcdc"/><path d="M4.5 5.5 L9 1 M4.5 5.5 L9 10" stroke="#dcdcdc" stroke-width="0.9"/><circle cx="9" cy="1.5" r="1.3" fill="#e6e6e6"/><circle cx="9" cy="9.5" r="1.3" fill="#e6e6e6"/></svg>
<svg style="left:679px;top:52px" width="6" height="4"><path d="M1 3 L3 1 L5 3" stroke="#bdbdbd" stroke-width="0.8" fill="none"/></svg>
<svg style="left:679px;top:440px" width="6" height="4"><path d="M1 1 L3 3 L5 1" stroke="#bdbdbd" stroke-width="0.8" fill="none"/></svg>


<!-- PROPS -->
<div class="a" style="left:708px;top:40px;width:132px;height:14px;background:#3f3f3f"></div>
<div class="a" style="left:708px;top:40px;width:25px;height:14px;background:#484848"></div>
<div class="a" style="left:733px;top:40px;width:34px;height:14px;background:#535353"></div>
<div class="a" style="left:767px;top:40px;width:38px;height:14px;background:#484848"></div>
<div class="t" style="left:713px;top:43px;font-size:5.5px;color:#bdbdbd">Layers</div>
<div class="t" style="left:737px;top:43px;font-size:5.4px;font-weight:bold;color:#f0f0f0">Properties</div>
<div class="t" style="left:771px;top:43px;font-size:5.5px;color:#bdbdbd">Appearance</div>
<div class="t" style="left:713px;top:60px;font-size:5.6px;color:#dadada">Rectangle</div>
<div class="a" style="left:708px;top:70px;width:132px;height:1px;background:#4a4a4a"></div>
<div class="t" style="left:713px;top:76px;font-size:5.6px;color:#dadada">Transform</div>
<svg style="left:713px;top:94px" width="12" height="12"><g fill="none" stroke="#dcdcdc" stroke-width="0.7"><circle cx="1.7" cy="1.7" r="1.3"/><circle cx="6" cy="1.7" r="1.3"/><circle cx="10.3" cy="1.7" r="1.3"/><circle cx="1.7" cy="6" r="1.3"/><circle cx="10.3" cy="6" r="1.3"/><circle cx="1.7" cy="10.3" r="1.3"/><circle cx="6" cy="10.3" r="1.3"/><circle cx="10.3" cy="10.3" r="1.3"/></g><circle cx="6" cy="6" r="1.6" fill="#fff"/></svg>
<div class="t" style="left:731px;top:90px;font-size:5.6px;color:#bdbdbd">X:</div>
<div class="a" style="left:738px;top:89px;width:28px;height:9px;background:#474747"></div>
<div class="t" style="left:740px;top:90px;font-size:5.6px;color:#ececec;-webkit-text-stroke:0.12px #ececec">540 px</div>
<div class="t" style="left:731px;top:104px;font-size:5.6px;color:#bdbdbd">Y:</div>
<div class="a" style="left:738px;top:103px;width:28px;height:9px;background:#474747"></div>
<div class="t" style="left:740px;top:104px;font-size:5.6px;color:#ececec;-webkit-text-stroke:0.12px #ececec">540 px</div>
<svg style="left:727px;top:118px" width="12" height="7"><path d="M0.5 6.5 H7 M0.5 6.5 L6 0.5 M3.5 3.5 A3 3 0 0 1 4.5 6.5" stroke="#cfcfcf" stroke-width="0.8" fill="none"/><circle cx="10" cy="3" r="0.5" fill="#ccc"/><circle cx="10" cy="5.5" r="0.5" fill="#ccc"/></svg>
<div class="a" style="left:738px;top:116px;width:19px;height:9px;background:#474747"></div>
<div class="a" style="left:757px;top:116px;width:9px;height:9px;background:#4c4c4c"></div>
<div class="t" style="left:740px;top:117px;font-size:5.6px;color:#e6e6e6">0°</div>
<svg style="left:759px;top:119px" width="6" height="4"><use href="#chev"/></svg>
<div class="t" style="left:775px;top:90px;font-size:5.6px;color:#bdbdbd">W:</div>
<div class="a" style="left:784px;top:89px;width:28px;height:9px;background:#474747"></div>
<div class="t" style="left:785px;top:90px;font-size:5.3px;color:#ececec;-webkit-text-stroke:0.1px #ececec">221.208 px</div>
<div class="t" style="left:776px;top:104px;font-size:5.6px;color:#bdbdbd">H:</div>
<div class="a" style="left:784px;top:103px;width:28px;height:9px;background:#474747"></div>
<div class="t" style="left:785px;top:104px;font-size:5.3px;color:#ececec;-webkit-text-stroke:0.1px #ececec">208.196 px</div>
<svg style="left:819px;top:96px" width="9" height="10"><ellipse cx="4" cy="3" rx="2" ry="2.3" fill="none" stroke="#dcdcdc" stroke-width="0.9"/><ellipse cx="4.5" cy="7" rx="2" ry="2.3" fill="none" stroke="#dcdcdc" stroke-width="0.9"/><path d="M0.5 1 L8 9.5" stroke="#dcdcdc" stroke-width="0.9"/></svg>
<svg style="left:785px;top:118px" width="9" height="7"><path d="M0.5 0.5 L3.5 3.5 L0.5 6.5 Z M8.5 0.5 L5.5 3.5 L8.5 6.5 Z" fill="#dcdcdc"/><path d="M4.5 0 V7" stroke="#aaa" stroke-width="0.6"/></svg>
<svg style="left:801px;top:117px" width="8" height="9"><path d="M0.5 0.5 L4 4 L7.5 0.5 Z M0.5 8.5 L4 5 L7.5 8.5 Z" fill="#dcdcdc"/><path d="M0 4.5 H8" stroke="#aaa" stroke-width="0.6"/></svg>
<svg style="left:825px;top:132px" width="8" height="2"><rect x="0" y="0" width="2" height="2" fill="#c8c8c8"/><rect x="3" y="0" width="2" height="2" fill="#c8c8c8"/><rect x="6" y="0" width="2" height="2" fill="#c8c8c8"/></svg>
<div class="a" style="left:708px;top:140px;width:132px;height:1px;background:#4a4a4a"></div>
<div class="t" style="left:713px;top:145px;font-size:5.6px;color:#dadada">Appearance</div>
<div class="a" style="left:713px;top:158px;width:10px;height:9px;background:#e8e8e8;padding:1px"><div style="width:8px;height:7px;background:#10a8f5"></div></div>
<div class="t" style="left:729px;top:159px;font-size:5.6px;color:#c6c6c6">Fill</div>
<svg style="left:714px;top:173px" width="9" height="9"><rect x="0" y="0" width="9" height="9" fill="#fff"/><path d="M0.5 8.5 L8.5 0.5" stroke="#d61d1d" stroke-width="1.2"/><rect x="3.3" y="3.3" width="2.4" height="2.4" fill="#444"/></svg>
<div class="t" style="left:729px;top:174px;font-size:5.6px;color:#ececec;background:#5e5e5e;border-bottom:1px solid #9a9a9a;line-height:6px">Stroke</div>
<svg style="left:753px;top:173px" width="6" height="9"><path d="M1 3 L3 1 L5 3 M1 6 L3 8 L5 6" stroke="#d8d8d8" stroke-width="0.8" fill="none"/></svg>
<div class="a" style="left:761px;top:173px;width:17px;height:9px;background:#474747"></div>
<div class="a" style="left:779px;top:173px;width:9px;height:9px;background:#4c4c4c"></div>
<svg style="left:781px;top:176px" width="6" height="4"><use href="#chev"/></svg>
<svg style="left:714px;top:188px" width="9" height="9"><rect x="0.5" y="0.5" width="8" height="8" fill="none" stroke="#aaa" stroke-width="0.7"/><g fill="#999"><rect x="2" y="2" width="1.5" height="1.5"/><rect x="5" y="2" width="1.5" height="1.5"/><rect x="3.5" y="3.5" width="1.5" height="1.5"/><rect x="2" y="5" width="1.5" height="1.5"/><rect x="5" y="5" width="1.5" height="1.5"/></g></svg>
<div class="t" style="left:729px;top:189px;font-size:5.6px;color:#ececec;background:#5e5e5e;border-bottom:1px solid #9a9a9a;line-height:6px">Opacity</div>
<div class="a" style="left:752px;top:188px;width:26px;height:9px;background:#474747"></div>
<div class="t" style="left:754px;top:189px;font-size:5.6px;color:#e6e6e6">100%</div>
<div class="a" style="left:779px;top:188px;width:9px;height:9px;background:#4c4c4c"></div>
<svg style="left:782px;top:190px" width="4" height="6"><path d="M0.5 0.5 L3 3 L0.5 5.5" stroke="#e6e6e6" stroke-width="0.9" fill="none"/></svg>
<div class="t" style="left:716px;top:203px;font-size:7.5px;line-height:8px;color:#bdbdbd;font-family:'Liberation Serif',serif;font-style:italic">fx<span style="font-size:4px">.</span></div>
<svg style="left:825px;top:219px" width="8" height="2"><rect x="0" y="0" width="2" height="2" fill="#e0e0e0"/><rect x="3" y="0" width="2" height="2" fill="#e0e0e0"/><rect x="6" y="0" width="2" height="2" fill="#e0e0e0"/></svg>
<div class="a" style="left:708px;top:227px;width:132px;height:1px;background:#4a4a4a"></div>
<div class="t" style="left:713px;top:235px;font-size:5.6px;color:#d0d0d0">Quick Actions</div>
<div class="a btn" style="left:713px;top:246px;width:53px;height:11px">Offset Path</div>
<div class="a btn" style="left:771px;top:246px;width:53px;height:11px">Expand Shape</div>
<div class="a btn" style="left:713px;top:262px;width:53px;height:11px">Arrange</div>
<div class="a btn" style="left:771px;top:262px;width:53px;height:11px">Align to Pixel Grid</div>
<div class="a btn" style="left:713px;top:278px;width:111px;height:12px">Recolor</div>
<div class="a" style="left:838px;top:40px;width:2px;height:414px;background:#474747"></div>


<!-- STATUS -->
<div class="a" style="left:272px;top:446px;width:406px;height:8px;background:#484848"></div>
<div class="a" style="left:466px;top:447px;width:13px;height:6px;background:#5c5c5c;border-radius:3px"></div>
<div class="a" style="left:678px;top:446px;width:8px;height:8px;background:#4d4d4d"></div>
<svg style="left:671px;top:447px" width="4" height="6"><path d="M0.5 0.5 L3 3 L0.5 5.5" stroke="#aaa" stroke-width="0.8" fill="none"/></svg>
<div class="a" style="left:41px;top:447px;width:26px;height:7px;background:#474747"></div>
<div class="t" style="left:43px;top:448px;font-size:5.6px;line-height:7px;color:#e0e0e0">66.67%</div>
<div class="a" style="left:67px;top:447px;width:9px;height:7px;background:#4c4c4c"></div>
<svg style="left:69px;top:449px" width="6" height="4"><use href="#chev"/></svg>
<svg style="left:80px;top:447px" width="18" height="6"><path d="M0.5 0.5 V5.5 M5 0.5 L1.5 3 L5 5.5 Z M12 0.5 L8.5 3 L12 5.5 Z" fill="#6a6a6a" stroke="#6a6a6a" stroke-width="0.6"/></svg>
<div class="a" style="left:99px;top:447px;width:28px;height:7px;background:#474747"></div>
<div class="t" style="left:101px;top:448px;font-size:5.6px;line-height:7px;color:#e0e0e0">1</div>
<svg style="left:121px;top:449px" width="6" height="4"><use href="#chev"/></svg>
<svg style="left:133px;top:447px" width="16" height="6"><path d="M0.5 0.5 L4 3 L0.5 5.5 Z M8 0.5 L11.5 3 L8 5.5 Z M14.5 0.5 V5.5" fill="#6a6a6a" stroke="#6a6a6a" stroke-width="0.6"/></svg>
<div class="t" style="left:193px;top:448px;font-size:5.6px;line-height:7px;color:#d6d6d6">Selection</div>
<svg style="left:259px;top:447px" width="4" height="6"><path d="M0.5 0.5 L3.5 3 L0.5 5.5 Z" fill="#e0e0e0"/></svg>
<svg style="left:268px;top:447px" width="4" height="6"><path d="M3 0.5 L0.5 3 L3 5.5" stroke="#bbb" stroke-width="0.8" fill="none"/></svg>
<!-- taskbar -->
<div class="a" style="left:0;top:454px;width:840px;height:1px;background:#2a3e55"></div>
<div class="a" style="left:0;top:455px;width:840px;height:5px;background:linear-gradient(#4f86bf,#2a63a3)"></div>
<svg style="left:0;top:451px" width="30" height="9"><circle cx="14" cy="12" r="8.5" fill="#3f7fb0" stroke="#c9dbe8" stroke-width="1"/><path d="M9.5 6.5 h4 v4 h-4z" fill="#e8552a"/><path d="M14.5 6.5 h4 v4 h-4z" fill="#6cbf3a"/><path d="M9.5 11 h4 v4 h-4z" fill="#3f9fe8"/><path d="M14.5 11 h4 v4 h-4z" fill="#f4c430"/></svg>
<div class="a" style="left:31px;top:456px;width:18px;height:4px;background:#a9c6dd"></div>
<div class="a" style="left:55px;top:456px;width:22px;height:4px;background:#a9c6dd"></div>
<div class="a" style="left:80px;top:456px;width:22px;height:4px;background:#b7c7d4"></div>
<div class="a" style="left:104px;top:456px;width:22px;height:4px;background:#a9c6dd"></div>
<div class="a" style="left:128px;top:456px;width:22px;height:4px;background:#a9c6dd"></div>
<div class="a" style="left:152px;top:456px;width:23px;height:4px;background:#b3c2cf"></div>
<div class="a" style="left:176px;top:456px;width:23px;height:4px;background:#a9c6dd"></div>
<div class="a" style="left:300px;top:456px;width:60px;height:4px;background:linear-gradient(90deg,rgba(255,255,255,0),rgba(200,225,245,0.6),rgba(255,255,255,0))"></div>
<div class="a" style="left:0;top:455px;width:840px;height:5px;overflow:hidden">
<div class="t" style="left:622px;top:1px;font-size:6.5px;color:#fff">Hmm   2.30 kb/s    </div>
<div class="a" style="left:680px;top:1px;width:6px;height:4px;background:#dfe8f0;border-radius:1px"></div>
<div class="t" style="left:800px;top:1px;font-size:6.5px;color:#fff">11:42 PM</div>
<div class="a" style="left:829px;top:0px;width:11px;height:5px;background:#7da3c8;border-left:1px solid #c8d8e8"></div>
</div>

</body></html>
